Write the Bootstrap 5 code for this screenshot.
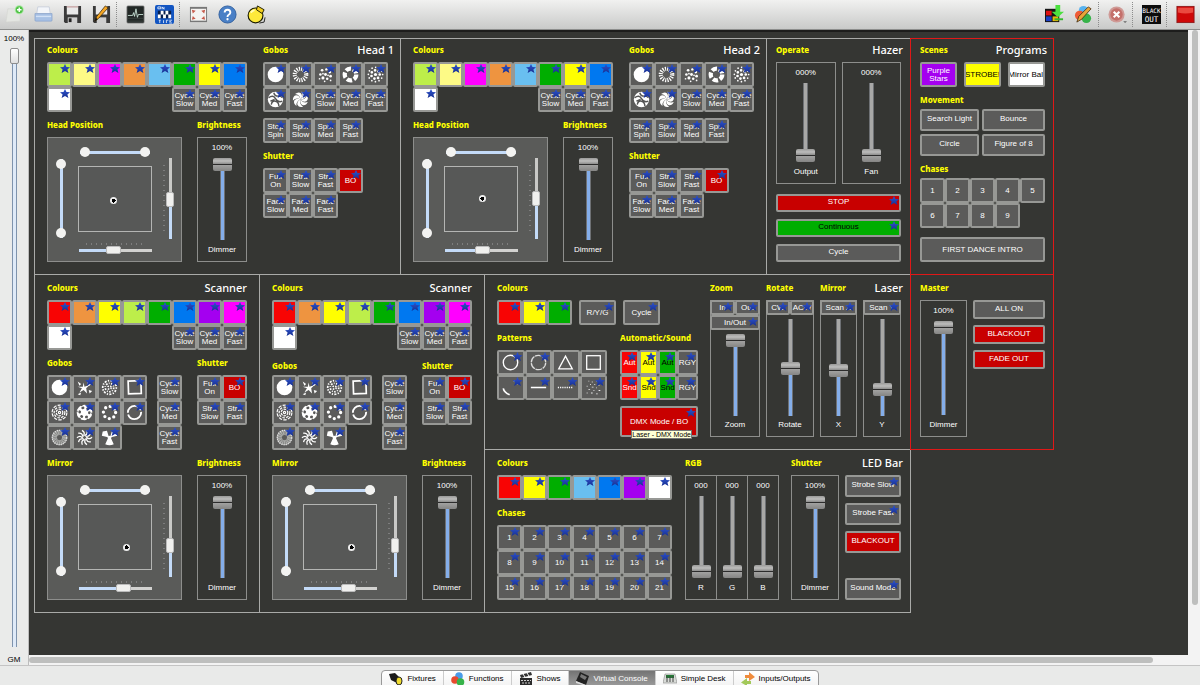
<!DOCTYPE html>
<html lang="en">
<head>
<meta charset="utf-8">
<meta name="viewport" content="width=device-width, initial-scale=1">
<title>Virtual Console</title>
<link href="https://cdn.jsdelivr.net/npm/bootstrap@5.3.0/dist/css/bootstrap.min.css" rel="stylesheet">
<style>
  :root { --ink:#353633; --edge:#979895; --line:#a9aaa8; }
  body { font:8px/10px "Liberation Sans", Arial, sans-serif; color:#000; background:#e9eae9; }
  svg { display:block; }

  /* toolbar */
  .toolbar { height:30px; background:linear-gradient(#f1f1f0,#c9cac9); border-bottom:1px solid #8d8e8d; }
  .tool { width:29px; height:28px; padding:0; border:0; border-radius:0; display:flex; align-items:center; justify-content:center; }
  .tool svg { width:19px; height:19px; }
  .divider { width:5px; border-left:1px dotted #8c8c8c; margin:2px 0; }

  /* grand master and scroll bars */
  .grand { width:29px; background:#eaebea; border-right:1px solid #bdbdbd; }
  .workspace { background:var(--ink); border-top:2px solid #1d1d1c; overflow:hidden; padding:6px 5px; }
  .scroll-v { width:12px; background:#f3f3f3; }
  .scroll-v div { width:6px; height:92%; background:#bebfbe; border-radius:3px; }
  .scroll-h { height:10px; background:#f3f3f3; padding:2px 0; }
  .scroll-h div { height:6px; width:96%; background:#bebfbe; border-radius:3px; }

  /* panels */
  .panel { border:1px solid var(--line); padding:0 12px 12px; margin:0 -1px -1px 0; }
  .panel-side { padding-left:9px; padding-right:9px; }
  .panel-low { padding-top:2px; }
  .panel-laser { padding-right:9px; }
  .panel-live { border-color:#e01818; padding-right:8px; position:relative; }
  .caption, .heading { margin:0; font-family:"Noto Sans", sans-serif; line-height:21px; height:23px; white-space:nowrap; }
  .caption { font-size:8px; font-weight:800; color:#ff0; }
  .heading { font-size:11px; font-weight:500; color:#fff; }
  .head-out { margin-right:-6px; }
  .side-out { margin-right:-2px; }
  .caption.short { height:20px; margin-top:2px; }
  .caption.low { padding-top:3px; }
  .stack { display:flex; flex-direction:column; gap:2px; }
  .g6 { gap:6px; } .g7 { gap:7px; } .g10 { gap:10px; } .g13 { gap:13px; } .g15 { gap:15px; }
  .w125 { width:125px; }
  .hazer-keys { margin-top:10px; }
  .moves { display:grid; grid-template-columns:59px 1fr; gap:3px; }
  .intro { margin-top:9px; }
  .spin { margin-top:6px; }
  .laser-left { margin-right:12px; width:201px; }
  .auto-col { width:78px; }
  .dmx-wrap { margin-top:6px; }
  .master-keys { width:72px; }
  .led-left { margin-right:13px; }
  .rgb { margin-right:13px; }
  .led-keys { width:56px; margin-left:6px; }

  /* buttons */
  .key { --bs-btn-color:#fff; --bs-btn-bg:#5b5b5a; --bs-btn-hover-color:#fff; --bs-btn-hover-bg:#6a6a69; --bs-btn-border-color:var(--edge); --bs-btn-hover-border-color:#bbb;
    position:relative; display:flex; align-items:center; justify-content:center; padding:0; overflow:hidden;
    border:2px solid var(--edge); border-radius:2px; font-size:8px; line-height:8px; text-align:center; white-space:nowrap; height:25px; min-width:0; }
  .tile { width:25px; }
  .two { white-space:normal; }
  .w37 { width:37px; } .h22 { height:22px; } .h19 { height:19px; } .h18 { height:18px; } .h15 { height:15px; }
  .h18, .h19, .h22 { padding-bottom:2px; }
  .fn::after { content:""; position:absolute; top:0; right:0; width:10px; height:9px; background:linear-gradient(#2f55cf,#172f92);
    clip-path:polygon(50% 0,65% 32%,100% 35%,74% 60%,84% 100%,50% 78%,16% 100%,26% 60%,0 35%,35% 32%); }
  .tile svg, .pat svg { width:17px; height:17px; }
  .red { --bs-btn-bg:#c80000; } .scarlet { --bs-btn-bg:#f80404; } .orange { --bs-btn-bg:#ee9440; }
  .yellow { --bs-btn-bg:#ffff00; --bs-btn-color:#000; } .cream { --bs-btn-bg:#fdfa86; } .lime { --bs-btn-bg:#bdee4a; }
  .green { --bs-btn-bg:#00ae00; --bs-btn-color:#000; } .sky { --bs-btn-bg:#69bff0; } .blue { --bs-btn-bg:#0078f0; }
  .violet { --bs-btn-bg:#a400f0; } .magenta { --bs-btn-bg:#ff00ff; } .white { --bs-btn-bg:#fff; --bs-btn-color:#000; }
  .tiles { display:grid; grid-auto-rows:25px; align-content:start; }
  .t8 { grid-template-columns:repeat(8,25px); } .t7 { grid-template-columns:repeat(7,25px); }
  .t5 { grid-template-columns:repeat(5,25px); } .t4 { grid-template-columns:repeat(4,25px); }
  .t3 { grid-template-columns:repeat(3,25px); } .t2 { grid-template-columns:repeat(2,25px); }
  .t-pat { width:110px; grid-template-columns:repeat(4,1fr); }
  .t-auto { grid-template-columns:19px 19px 19px 21px; }
  .from6 { grid-column-start:6; }
  .dmx { height:31px; }
  .tip { position:absolute; right:6px; bottom:-2px; background:#ffffd6; color:#000; border:1px solid #777; font-size:7px; line-height:7px; white-space:nowrap; }

  /* faders */
  .fader { border:1px solid #8d8e8c; color:#fff; display:flex; flex-direction:column; align-items:center; gap:5px; padding:5px 0 6px; line-height:10px; width:50px; height:125px; }
  .fader.topped { padding-top:0; gap:4px; }
  .fader output { line-height:10px; }
  .keys { align-self:stretch; margin:-1px -1px 0; }
  .f48 { width:48px; } .f47 { width:47px; } .f37 { width:37px; } .f38 { width:38px; } .f32 { width:32px; margin-right:-1px; }
  .tall { height:137px; }
  .haze { height:122px; }
  .up { writing-mode:vertical-lr; direction:rtl; }
  input[type=range] { -webkit-appearance:none; appearance:none; background:none; margin:0; padding:0; --v:50%; }
  .main { flex:1 1 0; min-height:0; width:19px; }
  .main::-webkit-slider-runnable-track { width:5px; height:100%; background:linear-gradient(to top,#84aeea var(--v),#a8a8a7 var(--v)); border:solid #6e7175; border-width:0 1px; }
  .main::-webkit-slider-thumb { -webkit-appearance:none; width:19px; height:13px; margin-left:-8px; border:0; border-radius:2px;
    background:linear-gradient(#9a9a99 0,#bdbdbc 3px,#8c8c8b 6px,#2c2c2c 6px,#2c2c2c 7px,#a2a2a1 7px,#858584 13px); }
  .gm { flex:1 1 0; min-height:0; width:9px; }
  .gm::-webkit-slider-runnable-track { width:5px; height:100%; background:linear-gradient(to right,#7e93ad 1px,#dfeaf8 1px,#dfeaf8 4px,#7e93ad 4px); }
  .gm::-webkit-slider-thumb { -webkit-appearance:none; width:9px; height:16px; margin-left:-2px; border:1px solid #8d8d8d; border-radius:2px; background:linear-gradient(#fff,#e0e0e0); }

  /* position pad */
  .pad { width:135px; height:125px; background:#5a5b59; border:1px solid #8d8e8c; display:grid; grid-template:28px 66px 1fr / 26px 1fr 25px; justify-items:center; }
  .field { grid-area:2/2; width:74px; height:66px; border:1px solid #b4b5b3; background:#575857; position:relative; }
  .target { position:absolute; width:7px; height:7px; margin:-4px; border-radius:50%; background:radial-gradient(#000 1px,#000 2px,#eee 2px); }
  .across { grid-area:1/2; display:grid; align-items:center; }
  .down { grid-area:1/1/4/2; display:grid; align-content:center; padding-bottom:3px; }
  .across input, .down input { grid-area:1/1; pointer-events:none; }
  .across input { width:70px; height:10px; }
  .down input { width:10px; height:79px; }
  .end::-webkit-slider-runnable-track { height:3px; background:#c4dbf8; }
  .down .end::-webkit-slider-runnable-track { height:100%; width:3px; }
  .end + .end::-webkit-slider-runnable-track { background:none; }
  .end::-webkit-slider-thumb { -webkit-appearance:none; pointer-events:auto; width:10px; height:10px; margin-top:-4px; border:0; border-radius:50%; background:#f3f3f1; }
  .down .end::-webkit-slider-thumb { margin:0 0 0 -4px; }
  .pan { grid-area:3/2; padding-top:11px; display:flex; flex-direction:column; align-items:center; gap:1px; }
  .tilt { grid-area:1/3/4/4; display:flex; align-items:center; gap:1px; padding-bottom:3px; }
  .pan i { width:58px; height:2px; background:repeating-linear-gradient(to right,#7d7d7d 0 1px,transparent 1px 5px); }
  .tilt i { width:2px; height:66px; background:repeating-linear-gradient(#7d7d7d 0 1px,transparent 1px 5px); }
  .pan input { width:73px; height:8px; }
  .tilt input { width:8px; height:81px; }
  .pan input::-webkit-slider-runnable-track { height:3px; background:linear-gradient(to right,#c4dbf8 var(--v),#d2d2d0 var(--v)); }
  .tilt input::-webkit-slider-runnable-track { width:3px; height:100%; background:linear-gradient(to top,#c4dbf8 var(--v),#c9c9c7 var(--v)); }
  .pan input::-webkit-slider-thumb { -webkit-appearance:none; width:15px; height:8px; margin-top:-3px; border:1px solid #bbb; border-radius:2px; background:#f0f0ee; }
  .tilt input::-webkit-slider-thumb { -webkit-appearance:none; width:8px; height:15px; margin-left:-3px; border:1px solid #bbb; border-radius:2px; background:#f0f0ee; }

  /* bottom tabs */
  .tabbar { height:20px; padding-top:4px; border-top:1px solid #c4c4c4; background:#e9eae9; overflow:hidden; }
  .tabset { border:1px solid #999; border-radius:4px 4px 0 0; background:linear-gradient(#fff,#f1f1f1); overflow:hidden; height:20px; }
  .tabset .nav-link { display:flex; align-items:center; gap:4px; height:15px; padding:0 7px; color:#000; font-size:8px; font-weight:400; line-height:14px; border-right:1px solid #ccc; border-radius:0; }
  .tabset .nav-link.active { background:linear-gradient(#747474,#9b9b9b); color:#fff; }
  .tabset svg { width:14px; height:14px; }
</style>
</head>
<body class="vh-100 d-flex flex-column overflow-hidden">

<svg width="0" height="0" class="position-absolute" aria-hidden="true">
  <defs>
    <g id="ray"><path d="M10 10Q14 6 11 1Q16 2 16 6Q15 10 10 10Z" fill="#fff"/></g>
    <g id="hook"><path d="M10.500 7.500Q14.500 6 12.500 1.500" fill="none" stroke="#fff" stroke-width="1.500"/></g>
    <symbol id="g-open" viewBox="0 0 20 20"><circle cx="10" cy="10" r="9.200" fill="#fff"/></symbol>
    <symbol id="g-sun" viewBox="0 0 20 20"><circle cx="10" cy="10" r="6.700" fill="none" stroke="#fff" stroke-width="5" stroke-dasharray="1.300 1.331"/></symbol>
    <symbol id="g-dots" viewBox="0 0 20 20" fill="#fff"><circle cx="10" cy="10" r="1.700"/><circle cx="6" cy="5" r="1.600"/><circle cx="11" cy="4" r="1.400"/><circle cx="15" cy="7" r="1.700"/><circle cx="4" cy="10" r="1.500"/><circle cx="7" cy="14" r="1.800"/><circle cx="12" cy="15" r="1.500"/><circle cx="16" cy="12" r="1.600"/><circle cx="3" cy="15" r="1"/><circle cx="9" cy="18" r="1"/><circle cx="16" cy="17" r="1"/><circle cx="7" cy="9" r="1"/><circle cx="13" cy="11" r="1"/></symbol>
    <symbol id="g-blades" viewBox="0 0 20 20"><circle cx="10" cy="10" r="6.800" fill="none" stroke="#fff" stroke-width="5" stroke-dasharray="6.200 2.345"/></symbol>
    <symbol id="g-burst" viewBox="0 0 20 20" fill="#fff"><circle cx="10" cy="10" r="1.900"/><circle cx="10" cy="10" r="5" fill="none" stroke="#fff" stroke-width="3.200" stroke-linecap="round" stroke-dasharray="0 4.488"/><circle cx="10" cy="10" r="8.400" fill="none" stroke="#fff" stroke-width="2" stroke-linecap="round" stroke-dasharray="0 4.398"/></symbol>
    <symbol id="g-storm" viewBox="0 0 20 20"><circle cx="10" cy="10" r="9" fill="#fff"/><path d="M2 8Q7 4 10 9T18 12M5 16Q6 11 10 12T14 18M8 2Q9 6 13 6T18 8M4 12L9 10" fill="none" stroke="#555" stroke-width="1.700"/></symbol>
    <symbol id="g-swirl" viewBox="0 0 20 20"><use href="#ray"/><use href="#ray" transform="rotate(51 10 10)"/><use href="#ray" transform="rotate(103 10 10)"/><use href="#ray" transform="rotate(154 10 10)"/><use href="#ray" transform="rotate(206 10 10)"/><use href="#ray" transform="rotate(257 10 10)"/><use href="#ray" transform="rotate(309 10 10)"/></symbol>
    <symbol id="g-spiral" viewBox="0 0 20 20"><circle cx="10" cy="10" r="2.300" fill="none" stroke="#fff"/><use href="#hook"/><use href="#hook" transform="rotate(36 10 10)"/><use href="#hook" transform="rotate(72 10 10)"/><use href="#hook" transform="rotate(108 10 10)"/><use href="#hook" transform="rotate(144 10 10)"/><use href="#hook" transform="rotate(180 10 10)"/><use href="#hook" transform="rotate(216 10 10)"/><use href="#hook" transform="rotate(252 10 10)"/><use href="#hook" transform="rotate(288 10 10)"/><use href="#hook" transform="rotate(324 10 10)"/></symbol>
    <symbol id="g-spark" viewBox="0 0 20 20"><path d="M9 4L10 9L16 7L12 11L13 17L9 13L4 16L7 11L2 9L8 9ZM14 2L15 5L19 4L16 8L13 7ZM2 3L6 6L4 8ZM15 13L19 14L16 17ZM2 18L6 16L5 19Z" fill="#fff"/></symbol>
    <symbol id="g-grain" viewBox="0 0 20 20" fill="none" stroke="#fff"><circle cx="10" cy="10" r="2" stroke-width="2" stroke-dasharray="1.500 1.600"/><circle cx="10" cy="10" r="5" stroke-width="2" stroke-dasharray="2 1.500 1 1.700"/><circle cx="10" cy="10" r="8" stroke-width="2" stroke-dasharray="1.500 1.600 2.500 1.500"/></symbol>
    <symbol id="g-square" viewBox="0 0 20 20"><path d="M2.500 2.500L17.500 2L18 17L3 17.500Z" fill="none" stroke="#fff" stroke-width="2"/></symbol>
    <symbol id="g-maze" viewBox="0 0 20 20" fill="none" stroke="#fff" stroke-width="1.400"><circle cx="10" cy="10" r="8.700" stroke-dasharray="4 1.500"/><circle cx="10" cy="10" r="6.300" stroke-dasharray="3 1.600"/><circle cx="10" cy="10" r="3.900" stroke-dasharray="3 1.200"/><circle cx="10" cy="10" r="1.300"/></symbol>
    <symbol id="g-ball" viewBox="0 0 20 20"><circle cx="10" cy="10" r="9.200" fill="#fff"/><circle cx="10" cy="10" r="5.700" fill="none" stroke="#555" stroke-width="3" stroke-linecap="round" stroke-dasharray="0.600 5.369"/><circle cx="10" cy="10" r="8.900" fill="none" stroke="#555" stroke-width="1.400" stroke-dasharray="2 7.320"/></symbol>
    <symbol id="g-ringdots" viewBox="0 0 20 20"><circle cx="10" cy="10" r="7.200" fill="none" stroke="#fff" stroke-width="3.900" stroke-linecap="round" stroke-dasharray="0 5.655"/></symbol>
    <symbol id="g-ring" viewBox="0 0 20 20"><circle cx="10" cy="10" r="7.800" fill="none" stroke="#fff" stroke-width="2.200" stroke-dasharray="22 2"/></symbol>
    <symbol id="g-fuzz" viewBox="0 0 20 20"><circle cx="10" cy="10" r="6" fill="none" stroke="#a9aaa8" stroke-width="6" stroke-dasharray="1.700 .4"/><circle cx="10" cy="10" r="8.500" fill="none" stroke="#ddd" stroke-width="1.500" stroke-dasharray="1.600 1"/></symbol>
    <symbol id="g-tri" viewBox="0 0 20 20"><g fill="#fff"><path d="M9.500 10L1 8L2 3L7 2ZM10.500 10L19 8L18 3L13 2ZM9 9H11L15 18Q10 20 5 18Z"/><circle cx="10" cy="10" r="2.200"/></g></symbol>
    <symbol id="p-circle" viewBox="0 0 20 20"><circle cx="10" cy="10" r="8.500" fill="none" stroke="#fff" stroke-width="1.600"/></symbol>
    <symbol id="p-dash" viewBox="0 0 20 20"><circle cx="10" cy="10" r="8.500" fill="none" stroke="#ddd" stroke-width="1.500" stroke-dasharray="8 .9"/></symbol>
    <symbol id="p-tri" viewBox="0 0 20 20"><path d="M10 2.500L18 17.500H2Z" fill="none" stroke="#fff" stroke-width="1.500"/></symbol>
    <symbol id="p-square" viewBox="0 0 20 20"><rect x="2" y="2" width="16" height="16" fill="none" stroke="#fff" stroke-width="1.500"/></symbol>
    <symbol id="p-arc" viewBox="0 0 20 20"><path d="M1.500 11Q2.500 16 9 18.500M14 2Q17 3 18.500 6" fill="none" stroke="#fff" stroke-width="2"/></symbol>
    <symbol id="p-line" viewBox="0 0 20 20"><path d="M1 10H19" stroke="#fff" stroke-width="1.800"/></symbol>
    <symbol id="p-dotted" viewBox="0 0 20 20"><path d="M1 10H19" stroke="#fff" stroke-width="1.500" stroke-dasharray="1.400 1.200"/></symbol>
  </defs>
</svg>

<header class="toolbar d-flex align-items-center flex-shrink-0">
  <button class="btn tool" aria-label="New"><svg viewBox="0 0 20 20"><path d="M3 4H14L16 8V17L1 18Z" fill="#e4e6e2" stroke="#d2d4cf" stroke-width=".6"/><circle cx="15" cy="5" r="4.700" fill="#a8e8a0"/><circle cx="15" cy="5" r="3.700" fill="#4fc146"/><path d="M15 2.600V7.400M12.600 5H17.400" stroke="#fff" stroke-width="1.500"/></svg></button>
  <button class="btn tool" aria-label="Open"><svg viewBox="0 0 20 20"><path d="M4 2H16L17 9H3Z" fill="#f3f5f9" stroke="#b5bfd2" stroke-width=".6"/><path d="M1 9H19V16Q19 17 18 17H2Q1 17 1 16Z" fill="#a7c0e4" stroke="#7f9bc6" stroke-width=".6"/><path d="M2 12H18" stroke="#d3e1f5" stroke-width="1.500"/></svg></button>
  <button class="btn tool" aria-label="Save"><svg viewBox="0 0 20 20"><path d="M1 1H19V19H2L1 17Z" fill="#3a3a3a"/><rect x="4" y="1" width="12" height="9" fill="#e9e9e9"/><path d="M4 2H16" stroke="#b88"/><rect x="5" y="13" width="10" height="6" fill="#cfcfcf"/><rect x="6" y="14" width="3" height="4" fill="#222"/></svg></button>
  <button class="btn tool" aria-label="Save as"><svg viewBox="0 0 20 20"><path d="M1 1H19V19H2L1 17Z" fill="#3a3a3a"/><rect x="4" y="1" width="12" height="9" fill="#e9e9e9"/><rect x="5" y="13" width="10" height="6" fill="#cfcfcf"/><path d="M3 17L5 12L14 1L17 3L7 14Z" fill="#f5a623" stroke="#3a2500" stroke-width=".8"/><path d="M3 17L4 13.500L6 15Z" fill="#111"/></svg></button>
  <div class="divider align-self-stretch"></div>
  <button class="btn tool" aria-label="Monitor"><svg viewBox="0 0 20 20"><rect x="1" y="1" width="18" height="18" rx="1" fill="#222826" stroke="#777" stroke-width=".8"/><path d="M2 11H7L8 8L9 12L10.500 4L12 13L13 10H18" fill="none" stroke="#cfe9dd" stroke-width=".9"/><path d="M2 14H18M2 17H18" stroke="#4b5451" stroke-width=".6"/></svg></button>
  <button class="btn tool" aria-label="Address tool"><svg viewBox="0 0 20 20"><rect x="0" y="0" width="20" height="20" rx="2" fill="#1255c2"/><rect x="3" y="6" width="14" height="8" fill="#071f4c"/><path d="M3 10H6V14H3ZM6 6H9V10H6ZM11 6H14V10H11ZM8.500 10H11.500V14H8.500ZM14 10H17V14H14Z" fill="#fff"/><path d="M3 2H6V4H3ZM7.500 4.500V2L9.500 4.500V2M4 16H6M5 16V19M9 16V19M12 19V16H14M15 16H18M15 19H18M15 17.500H17" stroke="#fff" stroke-width=".8" fill="none"/></svg></button>
  <div class="divider align-self-stretch"></div>
  <button class="btn tool" aria-label="Full screen"><svg viewBox="0 0 20 20"><rect x="1" y="2" width="18" height="16" fill="#777"/><rect x="2" y="4" width="16" height="12.500" fill="#f4f3f1"/><path d="M3 5L7 6L4 9ZM17 5L13 6L16 9ZM3 15.500L7 14.500L4 11.500ZM17 15.500L13 14.500L16 11.500Z" fill="#c75b4c"/></svg></button>
  <button class="btn tool" aria-label="Help"><svg viewBox="0 0 20 20"><circle cx="10" cy="10" r="9" fill="#4a80c6" stroke="#2f5f9e"/><path d="M7 8Q7 5 10 5T13 8Q13 9.500 11 10.500Q10 11 10 12.500" fill="none" stroke="#fff" stroke-width="2"/><circle cx="10" cy="15" r="1.200" fill="#fff"/></svg></button>
  <button class="btn tool" aria-label="About"><svg viewBox="0 0 20 20"><circle cx="9" cy="11" r="7.800" fill="#fde93a" stroke="#1a1a00" stroke-width="1.200"/><path d="M11 1L18 5L16 9L10 5Z" fill="#f3cf20" stroke="#1a1a00"/><path d="M4 8Q6 5 8 6" stroke="#fffbb8" stroke-width="2" fill="none"/><path d="M13 19L18 18L19 13" fill="none" stroke="#222" stroke-width="1"/></svg></button>
  <div class="ms-auto d-flex align-items-center align-self-stretch">
    <button class="btn tool" aria-label="Import"><svg viewBox="0 0 20 20"><rect x="0" y="4" width="15" height="14" fill="#151515"/><rect x="1" y="6" width="6" height="5" fill="#e01111"/><rect x="1" y="12" width="6" height="5" fill="#1b3fc4"/><rect x="8" y="12" width="6" height="5" fill="#e5b60c"/><path d="M11 0H16V7H20L13.500 13L7 7H11Z" fill="#4be03f"/><path d="M10 15H19" stroke="#32b82a" stroke-width="2"/></svg></button>
    <button class="btn tool" aria-label="Edit functions"><svg viewBox="0 0 20 20"><circle cx="10" cy="6" r="5" fill="#59b3ef"/><circle cx="6" cy="11" r="5" fill="#ef5b35"/><circle cx="13" cy="14" r="5" fill="#37b34a"/><path d="M3 18L5 12L15 2L18 4L8 15Z" fill="#e7a43a" stroke="#40280a" stroke-width=".8"/></svg></button>
    <div class="divider align-self-stretch"></div>
    <button class="btn tool" aria-label="Stop"><svg viewBox="0 0 20 20"><circle cx="9" cy="10" r="8.500" fill="#cf9a96"/><circle cx="9" cy="10" r="6.500" fill="#c4706b"/><path d="M6 7L12 13M12 7L6 13" stroke="#fff" stroke-width="2.200"/><path d="M16 17H20L18 19Z" fill="#666"/></svg></button>
    <div class="divider align-self-stretch"></div>
    <button class="btn tool" aria-label="Blackout"><svg viewBox="0 0 20 20"><rect width="20" height="20" fill="#0c0c0c"/><text x="10" y="8.500" text-anchor="middle" font-family="DejaVu Sans Mono, monospace" font-size="6.500" fill="#fff">BLACK</text><text x="10" y="17.500" text-anchor="middle" font-family="DejaVu Sans Mono, monospace" font-size="8" fill="#fff">OUT</text></svg></button>
    <div class="divider align-self-stretch"></div>
    <button class="btn tool" aria-label="Mode"><svg viewBox="0 0 20 20"><rect x="1" y="1.500" width="18" height="17" fill="#cf0808" stroke="#8f1c1c"/><path d="M2 3H18V8Q10 10 2 8Z" fill="#ea4a40"/></svg></button>
  </div>
</header>

<main class="d-flex flex-grow-1 overflow-hidden">
  <aside class="grand d-flex flex-column align-items-center flex-shrink-0">
    <label for="gm" class="mb-1 pt-1">100%</label>
    <input id="gm" class="gm up" type="range" value="100">
    <span class="mt-2">GM</span>
  </aside>
  <div class="d-flex flex-column flex-grow-1 overflow-hidden">
    <div class="d-flex flex-grow-1 overflow-hidden">
      <div class="workspace flex-grow-1">

        <div class="d-flex">
          <!-- Head 1 -->
          <section class="panel d-flex gap-3">
            <div class="stack">
              <div>
                <h3 class="caption">Colours</h3>
                <div class="tiles t8">
                  <button class="btn key tile fn lime" aria-label="Lime"></button><button class="btn key tile fn cream" aria-label="Cream"></button><button class="btn key tile fn magenta" aria-label="Magenta"></button><button class="btn key tile fn orange" aria-label="Orange"></button><button class="btn key tile fn sky" aria-label="Sky"></button><button class="btn key tile fn green" aria-label="Green"></button><button class="btn key tile fn yellow" aria-label="Yellow"></button><button class="btn key tile fn blue" aria-label="Blue"></button>
                  <button class="btn key tile fn white" aria-label="White"></button><button class="btn key tile two fn from6">Cycle Slow</button><button class="btn key tile two fn">Cycle Med</button><button class="btn key tile two fn">Cycle Fast</button>
                </div>
              </div>
              <div class="d-flex g15">
                <div>
                  <h3 class="caption">Head Position</h3>
                  <div class="pad">
                    <div class="across"><input class="end" type="range" value="0" aria-label="Pan start"><input class="end" type="range" value="100" aria-label="Pan end"></div>
                    <div class="down"><input class="end up" type="range" value="0" aria-label="Tilt start"><input class="end up" type="range" value="100" aria-label="Tilt end"></div>
                    <div class="field"><span class="target" style="left:48%;top:53%"></span></div>
                    <div class="tilt"><i></i><input class="up" type="range" value="47" aria-label="Tilt"></div>
                    <div class="pan"><i></i><input type="range" value="47" aria-label="Pan"></div>
                  </div>
                </div>
                <div>
                  <h3 class="caption">Brightness</h3>
                  <div class="fader"><output>100%</output><input id="h1" class="main up" type="range" value="100"><label for="h1">Dimmer</label></div>
                </div>
              </div>
            </div>
            <div class="stack w125">
              <div>
                <div class="d-flex justify-content-between"><h3 class="caption">Gobos</h3><h2 class="heading head-out">Head 1</h2></div>
                <div class="tiles t5">
                  <button class="btn key tile fn" aria-label="Open"><svg><use href="#g-open"/></svg></button><button class="btn key tile fn" aria-label="Sun"><svg><use href="#g-sun"/></svg></button><button class="btn key tile fn" aria-label="Dots"><svg><use href="#g-dots"/></svg></button><button class="btn key tile fn" aria-label="Blades"><svg><use href="#g-blades"/></svg></button><button class="btn key tile fn" aria-label="Burst"><svg><use href="#g-burst"/></svg></button>
                  <button class="btn key tile fn" aria-label="Storm"><svg><use href="#g-storm"/></svg></button><button class="btn key tile fn" aria-label="Swirl"><svg><use href="#g-swirl"/></svg></button><button class="btn key tile two fn">Cycle Slow</button><button class="btn key tile two fn">Cycle Med</button><button class="btn key tile two fn">Cycle Fast</button>
                </div>
                <div class="tiles t4 spin">
                  <button class="btn key tile two fn">Stop Spin</button><button class="btn key tile two fn">Spin Slow</button><button class="btn key tile two fn">Spin Med</button><button class="btn key tile two fn">Spin Fast</button>
                </div>
              </div>
              <div>
                <h3 class="caption">Shutter</h3>
                <div class="tiles t4">
                  <button class="btn key tile two fn">Full On</button><button class="btn key tile two fn">Strb Slow</button><button class="btn key tile two fn">Strb Fast</button><button class="btn key tile red fn">BO</button>
                  <button class="btn key tile two fn">Fade Slow</button><button class="btn key tile two fn">Fade Med</button><button class="btn key tile two fn">Fade Fast</button>
                </div>
              </div>
            </div>
          </section>

          <!-- Head 2 -->
          <section class="panel d-flex gap-3">
            <div class="stack">
              <div>
                <h3 class="caption">Colours</h3>
                <div class="tiles t8">
                  <button class="btn key tile fn lime" aria-label="Lime"></button><button class="btn key tile fn cream" aria-label="Cream"></button><button class="btn key tile fn magenta" aria-label="Magenta"></button><button class="btn key tile fn orange" aria-label="Orange"></button><button class="btn key tile fn sky" aria-label="Sky"></button><button class="btn key tile fn green" aria-label="Green"></button><button class="btn key tile fn yellow" aria-label="Yellow"></button><button class="btn key tile fn blue" aria-label="Blue"></button>
                  <button class="btn key tile fn white" aria-label="White"></button><button class="btn key tile two fn from6">Cycle Slow</button><button class="btn key tile two fn">Cycle Med</button><button class="btn key tile two fn">Cycle Fast</button>
                </div>
              </div>
              <div class="d-flex g15">
                <div>
                  <h3 class="caption">Head Position</h3>
                  <div class="pad">
                    <div class="across"><input class="end" type="range" value="0" aria-label="Pan start"><input class="end" type="range" value="100" aria-label="Pan end"></div>
                    <div class="down"><input class="end up" type="range" value="0" aria-label="Tilt start"><input class="end up" type="range" value="100" aria-label="Tilt end"></div>
                    <div class="field"><span class="target" style="left:53%;top:50%"></span></div>
                    <div class="tilt"><i></i><input class="up" type="range" value="50" aria-label="Tilt"></div>
                    <div class="pan"><i></i><input type="range" value="52" aria-label="Pan"></div>
                  </div>
                </div>
                <div>
                  <h3 class="caption">Brightness</h3>
                  <div class="fader"><output>100%</output><input id="h2" class="main up" type="range" value="100"><label for="h2">Dimmer</label></div>
                </div>
              </div>
            </div>
            <div class="stack w125">
              <div>
                <div class="d-flex justify-content-between"><h3 class="caption">Gobos</h3><h2 class="heading head-out">Head 2</h2></div>
                <div class="tiles t5">
                  <button class="btn key tile fn" aria-label="Open"><svg><use href="#g-open"/></svg></button><button class="btn key tile fn" aria-label="Sun"><svg><use href="#g-sun"/></svg></button><button class="btn key tile fn" aria-label="Dots"><svg><use href="#g-dots"/></svg></button><button class="btn key tile fn" aria-label="Blades"><svg><use href="#g-blades"/></svg></button><button class="btn key tile fn" aria-label="Burst"><svg><use href="#g-burst"/></svg></button>
                  <button class="btn key tile fn" aria-label="Storm"><svg><use href="#g-storm"/></svg></button><button class="btn key tile fn" aria-label="Swirl"><svg><use href="#g-swirl"/></svg></button><button class="btn key tile two fn">Cycle Slow</button><button class="btn key tile two fn">Cycle Med</button><button class="btn key tile two fn">Cycle Fast</button>
                </div>
                <div class="tiles t4 spin">
                  <button class="btn key tile two fn">Stop Spin</button><button class="btn key tile two fn">Spin Slow</button><button class="btn key tile two fn">Spin Med</button><button class="btn key tile two fn">Spin Fast</button>
                </div>
              </div>
              <div>
                <h3 class="caption">Shutter</h3>
                <div class="tiles t4">
                  <button class="btn key tile two fn">Full On</button><button class="btn key tile two fn">Strb Slow</button><button class="btn key tile two fn">Strb Fast</button><button class="btn key tile red fn">BO</button>
                  <button class="btn key tile two fn">Fade Slow</button><button class="btn key tile two fn">Fade Med</button><button class="btn key tile two fn">Fade Fast</button>
                </div>
              </div>
            </div>
          </section>

          <!-- Hazer -->
          <section class="panel panel-side">
            <div class="d-flex justify-content-between"><h3 class="caption">Operate</h3><h2 class="heading side-out">Hazer</h2></div>
            <div class="d-flex g6 w125">
              <div class="fader haze w-50"><output>000%</output><input id="out" class="main up" type="range" value="0"><label for="out">Output</label></div>
              <div class="fader haze w-50"><output>000%</output><input id="fan" class="main up" type="range" value="0"><label for="fan">Fan</label></div>
            </div>
            <div class="d-flex flex-column g7 hazer-keys">
              <button class="btn key h18 red fn">STOP</button>
              <button class="btn key h18 green fn">Continuous</button>
              <button class="btn key h18">Cycle</button>
            </div>
          </section>

          <!-- Programs -->
          <section class="panel panel-side panel-live">
            <div class="d-flex justify-content-between"><h3 class="caption">Scenes</h3><h2 class="heading side-out">Programs</h2></div>
            <div class="d-flex g7">
              <button class="btn key w37 two violet">Purple Stars</button><button class="btn key w37 yellow">STROBE!</button><button class="btn key w37 white">Mirror Ball</button>
            </div>
            <h3 class="caption short">Movement</h3>
            <div class="moves">
              <button class="btn key h22">Search Light</button><button class="btn key h22">Bounce</button>
              <button class="btn key h22">Circle</button><button class="btn key h22">Figure of 8</button>
            </div>
            <h3 class="caption short">Chases</h3>
            <div class="tiles t5">
              <button class="btn key tile">1</button><button class="btn key tile">2</button><button class="btn key tile">3</button><button class="btn key tile">4</button><button class="btn key tile">5</button>
              <button class="btn key tile">6</button><button class="btn key tile">7</button><button class="btn key tile">8</button><button class="btn key tile">9</button>
            </div>
            <button class="btn key w-100 intro">FIRST DANCE INTRO</button>
          </section>
        </div>

        <div class="d-flex align-items-start">
          <!-- Scanner, left -->
          <section class="panel panel-low stack">
            <div>
              <div class="d-flex justify-content-between"><h3 class="caption">Colours</h3><h2 class="heading">Scanner</h2></div>
              <div class="tiles t8">
                <button class="btn key tile fn scarlet" aria-label="Red"></button><button class="btn key tile fn orange" aria-label="Orange"></button><button class="btn key tile fn yellow" aria-label="Yellow"></button><button class="btn key tile fn lime" aria-label="Lime"></button><button class="btn key tile fn green" aria-label="Green"></button><button class="btn key tile fn blue" aria-label="Blue"></button><button class="btn key tile fn violet" aria-label="Violet"></button><button class="btn key tile fn magenta" aria-label="Magenta"></button>
                <button class="btn key tile fn white" aria-label="White"></button><button class="btn key tile two fn from6">Cycle Slow</button><button class="btn key tile two fn">Cycle Med</button><button class="btn key tile two fn">Cycle Fast</button>
              </div>
            </div>
            <div class="d-flex align-items-start">
              <div>
                <h3 class="caption">Gobos</h3>
                <div class="d-flex g10">
                  <div class="tiles t4">
                    <button class="btn key tile fn" aria-label="Open"><svg><use href="#g-open"/></svg></button><button class="btn key tile fn" aria-label="Spark"><svg><use href="#g-spark"/></svg></button><button class="btn key tile fn" aria-label="Grain"><svg><use href="#g-grain"/></svg></button><button class="btn key tile fn" aria-label="Square"><svg><use href="#g-square"/></svg></button>
                    <button class="btn key tile fn" aria-label="Maze"><svg><use href="#g-maze"/></svg></button><button class="btn key tile fn" aria-label="Ball"><svg><use href="#g-ball"/></svg></button><button class="btn key tile fn" aria-label="Dot ring"><svg><use href="#g-ringdots"/></svg></button><button class="btn key tile fn" aria-label="Ring"><svg><use href="#g-ring"/></svg></button>
                    <button class="btn key tile fn" aria-label="Fuzz"><svg><use href="#g-fuzz"/></svg></button><button class="btn key tile fn" aria-label="Spiral"><svg><use href="#g-spiral"/></svg></button><button class="btn key tile fn" aria-label="Trefoil"><svg><use href="#g-tri"/></svg></button>
                  </div>
                  <div class="tiles"><button class="btn key tile two fn">Cycle Slow</button><button class="btn key tile two fn">Cycle Med</button><button class="btn key tile two fn">Cycle Fast</button></div>
                </div>
              </div>
              <div class="ms-auto">
                <h3 class="caption">Shutter</h3>
                <div class="tiles t2"><button class="btn key tile two fn">Full On</button><button class="btn key tile red fn">BO</button><button class="btn key tile two fn">Strb Slow</button><button class="btn key tile two fn">Strb Fast</button></div>
              </div>
            </div>
            <div class="d-flex g15">
              <div>
                <h3 class="caption">Mirror</h3>
                <div class="pad">
                  <div class="across"><input class="end" type="range" value="0" aria-label="Pan start"><input class="end" type="range" value="100" aria-label="Pan end"></div>
                  <div class="down"><input class="end up" type="range" value="0" aria-label="Tilt start"><input class="end up" type="range" value="100" aria-label="Tilt end"></div>
                  <div class="field"><span class="target" style="left:66%;top:67%"></span></div>
                  <div class="tilt"><i></i><input class="up" type="range" value="36" aria-label="Tilt"></div>
                  <div class="pan"><i></i><input type="range" value="65" aria-label="Pan"></div>
                </div>
              </div>
              <div>
                <h3 class="caption">Brightness</h3>
                <div class="fader"><output>100%</output><input id="s1" class="main up" type="range" value="100"><label for="s1">Dimmer</label></div>
              </div>
            </div>
          </section>

          <!-- Scanner, right -->
          <section class="panel panel-low stack">
            <div>
              <div class="d-flex justify-content-between"><h3 class="caption">Colours</h3><h2 class="heading">Scanner</h2></div>
              <div class="tiles t8">
                <button class="btn key tile fn scarlet" aria-label="Red"></button><button class="btn key tile fn orange" aria-label="Orange"></button><button class="btn key tile fn yellow" aria-label="Yellow"></button><button class="btn key tile fn lime" aria-label="Lime"></button><button class="btn key tile fn green" aria-label="Green"></button><button class="btn key tile fn blue" aria-label="Blue"></button><button class="btn key tile fn violet" aria-label="Violet"></button><button class="btn key tile fn magenta" aria-label="Magenta"></button>
                <button class="btn key tile fn white" aria-label="White"></button><button class="btn key tile two fn from6">Cycle Slow</button><button class="btn key tile two fn">Cycle Med</button><button class="btn key tile two fn">Cycle Fast</button>
              </div>
            </div>
            <div class="d-flex align-items-start">
              <div>
                <h3 class="caption low">Gobos</h3>
                <div class="d-flex g10">
                  <div class="tiles t4">
                    <button class="btn key tile fn" aria-label="Open"><svg><use href="#g-open"/></svg></button><button class="btn key tile fn" aria-label="Spark"><svg><use href="#g-spark"/></svg></button><button class="btn key tile fn" aria-label="Grain"><svg><use href="#g-grain"/></svg></button><button class="btn key tile fn" aria-label="Square"><svg><use href="#g-square"/></svg></button>
                    <button class="btn key tile fn" aria-label="Maze"><svg><use href="#g-maze"/></svg></button><button class="btn key tile fn" aria-label="Ball"><svg><use href="#g-ball"/></svg></button><button class="btn key tile fn" aria-label="Dot ring"><svg><use href="#g-ringdots"/></svg></button><button class="btn key tile fn" aria-label="Ring"><svg><use href="#g-ring"/></svg></button>
                    <button class="btn key tile fn" aria-label="Fuzz"><svg><use href="#g-fuzz"/></svg></button><button class="btn key tile fn" aria-label="Spiral"><svg><use href="#g-spiral"/></svg></button><button class="btn key tile fn" aria-label="Trefoil"><svg><use href="#g-tri"/></svg></button>
                  </div>
                  <div class="tiles"><button class="btn key tile two fn">Cycle Slow</button><button class="btn key tile two fn">Cycle Med</button><button class="btn key tile two fn">Cycle Fast</button></div>
                </div>
              </div>
              <div class="ms-auto">
                <h3 class="caption low">Shutter</h3>
                <div class="tiles t2"><button class="btn key tile two fn">Full On</button><button class="btn key tile red fn">BO</button><button class="btn key tile two fn">Strb Slow</button><button class="btn key tile two fn">Strb Fast</button></div>
              </div>
            </div>
            <div class="d-flex g15">
              <div>
                <h3 class="caption">Mirror</h3>
                <div class="pad">
                  <div class="across"><input class="end" type="range" value="0" aria-label="Pan start"><input class="end" type="range" value="100" aria-label="Pan end"></div>
                  <div class="down"><input class="end up" type="range" value="0" aria-label="Tilt start"><input class="end up" type="range" value="100" aria-label="Tilt end"></div>
                  <div class="field"><span class="target" style="left:66%;top:67%"></span></div>
                  <div class="tilt"><i></i><input class="up" type="range" value="36" aria-label="Tilt"></div>
                  <div class="pan"><i></i><input type="range" value="65" aria-label="Pan"></div>
                </div>
              </div>
              <div>
                <h3 class="caption">Brightness</h3>
                <div class="fader"><output>100%</output><input id="s2" class="main up" type="range" value="100"><label for="s2">Dimmer</label></div>
              </div>
            </div>
          </section>

          <div>
            <div class="d-flex">
              <!-- Laser -->
              <section class="panel panel-low panel-laser d-flex">
                <div class="stack laser-left">
                  <div>
                    <h3 class="caption">Colours</h3>
                    <div class="d-flex g7">
                      <div class="tiles t3"><button class="btn key tile fn scarlet" aria-label="Red"></button><button class="btn key tile fn yellow" aria-label="Yellow"></button><button class="btn key tile fn green" aria-label="Green"></button></div>
                      <button class="btn key w37 fn">R/Y/G</button><button class="btn key w37 fn">Cycle</button>
                    </div>
                  </div>
                  <div class="d-flex g13">
                    <div>
                      <h3 class="caption">Patterns</h3>
                      <div class="tiles t-pat">
                        <button class="btn key pat fn" aria-label="Circle"><svg><use href="#p-circle"/></svg></button><button class="btn key pat fn" aria-label="Broken circle"><svg><use href="#p-dash"/></svg></button><button class="btn key pat" aria-label="Triangle"><svg><use href="#p-tri"/></svg></button><button class="btn key pat" aria-label="Square"><svg><use href="#p-square"/></svg></button>
                        <button class="btn key pat fn" aria-label="Arc"><svg><use href="#p-arc"/></svg></button><button class="btn key pat fn" aria-label="Line"><svg><use href="#p-line"/></svg></button><button class="btn key pat fn" aria-label="Dotted line"><svg><use href="#p-dotted"/></svg></button><button class="btn key pat fn" aria-label="Dots"><svg viewBox="0 0 20 20" fill="#eee"><path d="M4 2h1v1h-1zM8 3h1v1h-1zM13 2h1v1h-1zM6 6h1v1h-1zM11 6h1v1h-1zM16 7h1v1h-1zM2 8h1v1h-1zM8 9h2v1h-2zM13 10h1v1h-1zM4 12h2v1h-2zM10 13h1v1h-1zM16 13h2v1h-2zM2 16h1v1h-1zM7 16h2v1h-2zM13 17h2v1h-2z"/></svg></button>
                      </div>
                    </div>
                    <div class="auto-col">
                      <h3 class="caption">Automatic/Sound</h3>
                      <div class="tiles t-auto">
                        <button class="btn key scarlet fn">Aut</button><button class="btn key yellow fn">Aut</button><button class="btn key green fn">Aut</button><button class="btn key fn">RGY</button>
                        <button class="btn key scarlet fn">Snd</button><button class="btn key yellow fn">Snd</button><button class="btn key green fn">Snd</button><button class="btn key fn">RGY</button>
                      </div>
                      <div class="position-relative dmx-wrap">
                        <button class="btn key red fn dmx w-100">DMX Mode / BO</button>
                        <span class="tip" role="tooltip">Laser - DMX Mode</span>
                      </div>
                    </div>
                  </div>
                </div>
                <div class="d-flex g6">
                  <div>
                    <h3 class="caption">Zoom</h3>
                    <div class="fader topped tall">
                      <div class="keys d-flex flex-wrap"><button class="btn key h15 w-50 fn">In</button><button class="btn key h15 w-50 fn">Out</button><button class="btn key h15 w-100 fn">In/Out</button></div>
                      <input id="zoom" class="main up" type="range" value="100"><label for="zoom">Zoom</label>
                    </div>
                  </div>
                  <div>
                    <h3 class="caption">Rotate</h3>
                    <div class="fader topped tall f48">
                      <div class="keys d-flex"><button class="btn key h15 w-50 fn">CW</button><button class="btn key h15 w-50 fn">ACW</button></div>
                      <input id="rot" class="main up" type="range" value="49"><label for="rot">Rotate</label>
                    </div>
                  </div>
                  <div>
                    <div class="d-flex justify-content-between"><h3 class="caption">Mirror</h3><h2 class="heading side-out">Laser</h2></div>
                    <div class="d-flex g6">
                      <div class="fader topped tall f37">
                        <div class="keys"><button class="btn key h15 w-100 fn">Scan X</button></div>
                        <input id="mx" class="main up" type="range" value="46"><label for="mx">X</label>
                      </div>
                      <div class="fader topped tall f38">
                        <div class="keys"><button class="btn key h15 w-100 fn">Scan Y</button></div>
                        <input id="my" class="main up" type="range" value="24"><label for="my">Y</label>
                      </div>
                    </div>
                  </div>
                </div>
              </section>
              <!-- Master -->
              <section class="panel panel-low panel-side panel-live">
                <h3 class="caption">Master</h3>
                <div class="d-flex g6">
                  <div class="fader tall f47"><output>100%</output><input id="mst" class="main up" type="range" value="100"><label for="mst">Dimmer</label></div>
                  <div class="d-flex flex-column g6 master-keys"><button class="btn key h19">ALL ON</button><button class="btn key h19 red">BLACKOUT</button><button class="btn key h19 red">FADE OUT</button></div>
                </div>
              </section>
            </div>
            <div class="d-flex">
              <!-- LED Bar -->
              <section class="panel panel-low panel-laser d-flex">
                <div class="stack led-left">
                  <div>
                    <h3 class="caption">Colours</h3>
                    <div class="tiles t7"><button class="btn key tile fn scarlet" aria-label="Red"></button><button class="btn key tile fn yellow" aria-label="Yellow"></button><button class="btn key tile fn green" aria-label="Green"></button><button class="btn key tile fn sky" aria-label="Sky"></button><button class="btn key tile fn blue" aria-label="Blue"></button><button class="btn key tile fn violet" aria-label="Violet"></button><button class="btn key tile fn white" aria-label="White"></button></div>
                  </div>
                  <div>
                    <h3 class="caption">Chases</h3>
                    <div class="tiles t7">
                      <button class="btn key tile fn">1</button><button class="btn key tile fn">2</button><button class="btn key tile fn">3</button><button class="btn key tile fn">4</button><button class="btn key tile fn">5</button><button class="btn key tile fn">6</button><button class="btn key tile fn">7</button>
                      <button class="btn key tile fn">8</button><button class="btn key tile fn">9</button><button class="btn key tile fn">10</button><button class="btn key tile fn">11</button><button class="btn key tile fn">12</button><button class="btn key tile fn">13</button><button class="btn key tile fn">14</button>
                      <button class="btn key tile fn">15</button><button class="btn key tile fn">16</button><button class="btn key tile fn">17</button><button class="btn key tile fn">18</button><button class="btn key tile fn">19</button><button class="btn key tile fn">20</button><button class="btn key tile fn">21</button>
                    </div>
                  </div>
                </div>
                <div class="rgb">
                  <h3 class="caption">RGB</h3>
                  <div class="d-flex">
                    <div class="fader f32"><output>000</output><input id="r" class="main up" type="range" value="0"><label for="r">R</label></div>
                    <div class="fader f32"><output>000</output><input id="g" class="main up" type="range" value="0"><label for="g">G</label></div>
                    <div class="fader f32"><output>000</output><input id="b" class="main up" type="range" value="0"><label for="b">B</label></div>
                  </div>
                </div>
                <div>
                  <h3 class="caption">Shutter</h3>
                  <div class="fader f48"><output>100%</output><input id="led" class="main up" type="range" value="100"><label for="led">Dimmer</label></div>
                </div>
                <div class="led-keys d-flex flex-column">
                  <h2 class="heading text-end side-out">LED Bar</h2>
                  <div class="d-flex flex-column g6 flex-grow-1">
                    <button class="btn key h22 fn">Strobe Slow</button><button class="btn key h22 fn">Strobe Fast</button><button class="btn key h22 red">BLACKOUT</button><button class="btn key h22 fn mt-auto">Sound Mode</button>
                  </div>
                </div>
              </section>
            </div>
          </div>
        </div>

      </div>
      <div class="scroll-v flex-shrink-0 ps-1"><div></div></div>
    </div>
    <div class="scroll-h flex-shrink-0"><div></div></div>
  </div>
</main>

<footer class="tabbar d-flex justify-content-center flex-shrink-0">
  <nav class="nav tabset flex-nowrap">
    <a class="nav-link" href="#"><svg viewBox="0 0 14 14"><path d="M0 2L6 1L10 5L8 11L2 8Z" fill="#1b1b1b"/><ellipse cx="10" cy="9" rx="3" ry="4" fill="#f0dc30" stroke="#222"/></svg>Fixtures</a>
    <a class="nav-link" href="#"><svg viewBox="0 0 14 14"><circle cx="8" cy="4" r="3.800" fill="#4a9be8"/><circle cx="4" cy="8" r="3.800" fill="#e8492e"/><circle cx="9.500" cy="10" r="3.800" fill="#37b34a"/></svg>Functions</a>
    <a class="nav-link" href="#"><svg viewBox="0 0 14 14"><path d="M1 3L12 0L13 3L2 6Z" fill="#333"/><path d="M4 2L6 5M8 1L10 4" stroke="#fff"/><rect x="1" y="6" width="12" height="8" fill="#2b2b2b"/><path d="M2 8.500H12M3 11H11" stroke="#ccc" stroke-dasharray="2 1"/></svg>Shows</a>
    <a class="nav-link active" href="#" aria-current="page"><svg viewBox="0 0 14 14"><path d="M4 0L13 4L10 13L0 9Z" fill="#222"/><path d="M5 2L11 5L9 8L4 5Z" fill="#777"/><path d="M0 9L10 13V14L0 11Z" fill="#ddd"/></svg>Virtual Console</a>
    <a class="nav-link" href="#"><svg viewBox="0 0 14 14"><path d="M2 2H12L14 11H0Z" fill="#d9dcd8" stroke="#888" stroke-width=".6"/><path d="M3 3H11V6H3Z" fill="#237a35"/><path d="M4 4V10M7 4V10M10 4V10" stroke="#444"/></svg>Simple Desk</a>
    <a class="nav-link border-0" href="#"><svg viewBox="0 0 14 14"><path d="M4 3H8V0L14 5L8 9V6H4Z" fill="#ef8b3c"/><path d="M10 9H6V6L0 10.500L6 14V12H10Z" fill="#a3c95a"/></svg>Inputs/Outputs</a>
  </nav>
</footer>

<script src="https://cdn.jsdelivr.net/npm/bootstrap@5.3.0/dist/js/bootstrap.bundle.min.js"></script>
<script>
  // Keep each fader's coloured track in step with its value.
  document.querySelectorAll('input[type=range]').forEach(function (el) {
    function paint() { el.style.setProperty('--v', el.value + '%'); }
    el.addEventListener('input', paint);
    paint();
  });
</script>
</body>
</html>
